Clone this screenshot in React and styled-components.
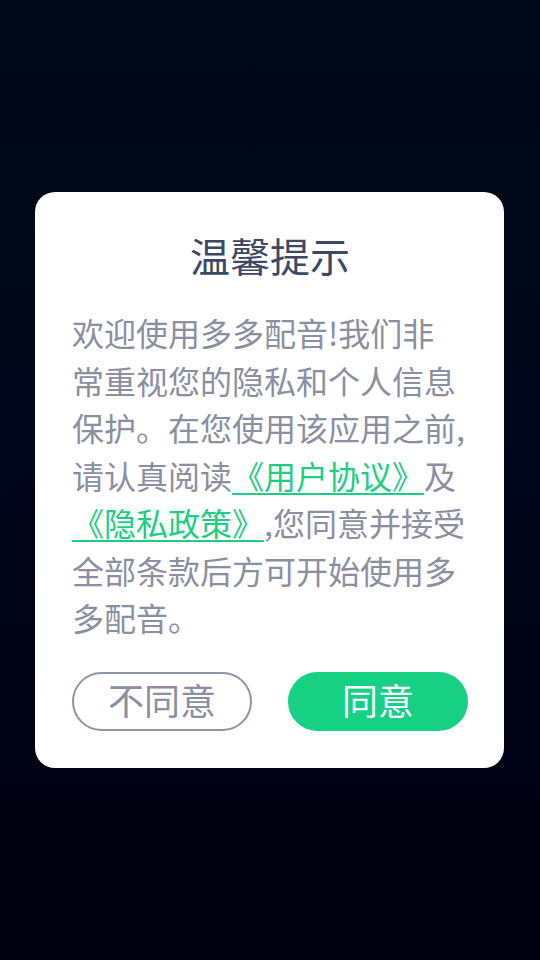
import React from 'react';
import styled, { createGlobalStyle } from 'styled-components';

const GlobalStyle = createGlobalStyle`
  html, body {
    margin: 0;
    padding: 0;
    height: 100%;
  }
  body {
    font-family: "Noto Sans CJK SC", "Noto Sans", sans-serif;
  }
  #root {
    height: 100%;
  }
`;

const Screen = styled.div`
  height: 960px;
  width: 540px;
  background: linear-gradient(180deg, #000918 0%, #00071a 45%, #00000f 100%);
  display: flex;
  flex-direction: column;
  align-items: flex-start;
  padding: 192px 0 0 35px;
  box-sizing: border-box;
`;

const Dialog = styled.div`
  width: 469px;
  background: #ffffff;
  border-radius: 20px;
  padding: 39px 36px 37px 37px;
  box-sizing: border-box;
`;

const Title = styled.h2`
  margin: 0;
  font-size: 40px;
  line-height: 48px;
  font-weight: 400;
  color: #3c4966;
  text-align: center;
`;

const Message = styled.p`
  margin: 30px 0 0;
  font-size: 32px;
  line-height: 47.5px;
  color: #8a90a2;
  white-space: nowrap;
`;

const Link = styled.a`
  color: #1ccf84;
  text-decoration: underline;
  text-decoration-thickness: 2px;
  text-underline-offset: 4px;
  cursor: pointer;
`;

const Actions = styled.div`
  display: flex;
  justify-content: space-between;
  margin-top: 30px;
`;

const Button = styled.button`
  width: 180px;
  height: 59px;
  border-radius: 30px;
  box-sizing: border-box;
  font-family: inherit;
  font-size: 36px;
  line-height: 1;
  padding: 0 0 4px;
  cursor: pointer;
  border: 2px solid ${props => (props.primary ? '#16d083' : '#8f95a8')};
  background: ${props => (props.primary ? '#16d083' : '#ffffff')};
  color: ${props => (props.primary ? '#ffffff' : '#8a90a2')};
`;

export default function App() {
  return (
    <>
      <GlobalStyle />
      <Screen>
        <Dialog>
          <Title>温馨提示</Title>
          <Message>
            欢迎使用多多配音!我们非<br />
            常重视您的隐私和个人信息<br />
            保护。在您使用该应用之前,<br />
            请认真阅读<Link>《用户协议》</Link>及<br />
            <Link>《隐私政策》</Link>,您同意并接受<br />
            全部条款后方可开始使用多<br />
            多配音。
          </Message>
          <Actions>
            <Button>不同意</Button>
            <Button primary>同意</Button>
          </Actions>
        </Dialog>
      </Screen>
    </>
  );
}
